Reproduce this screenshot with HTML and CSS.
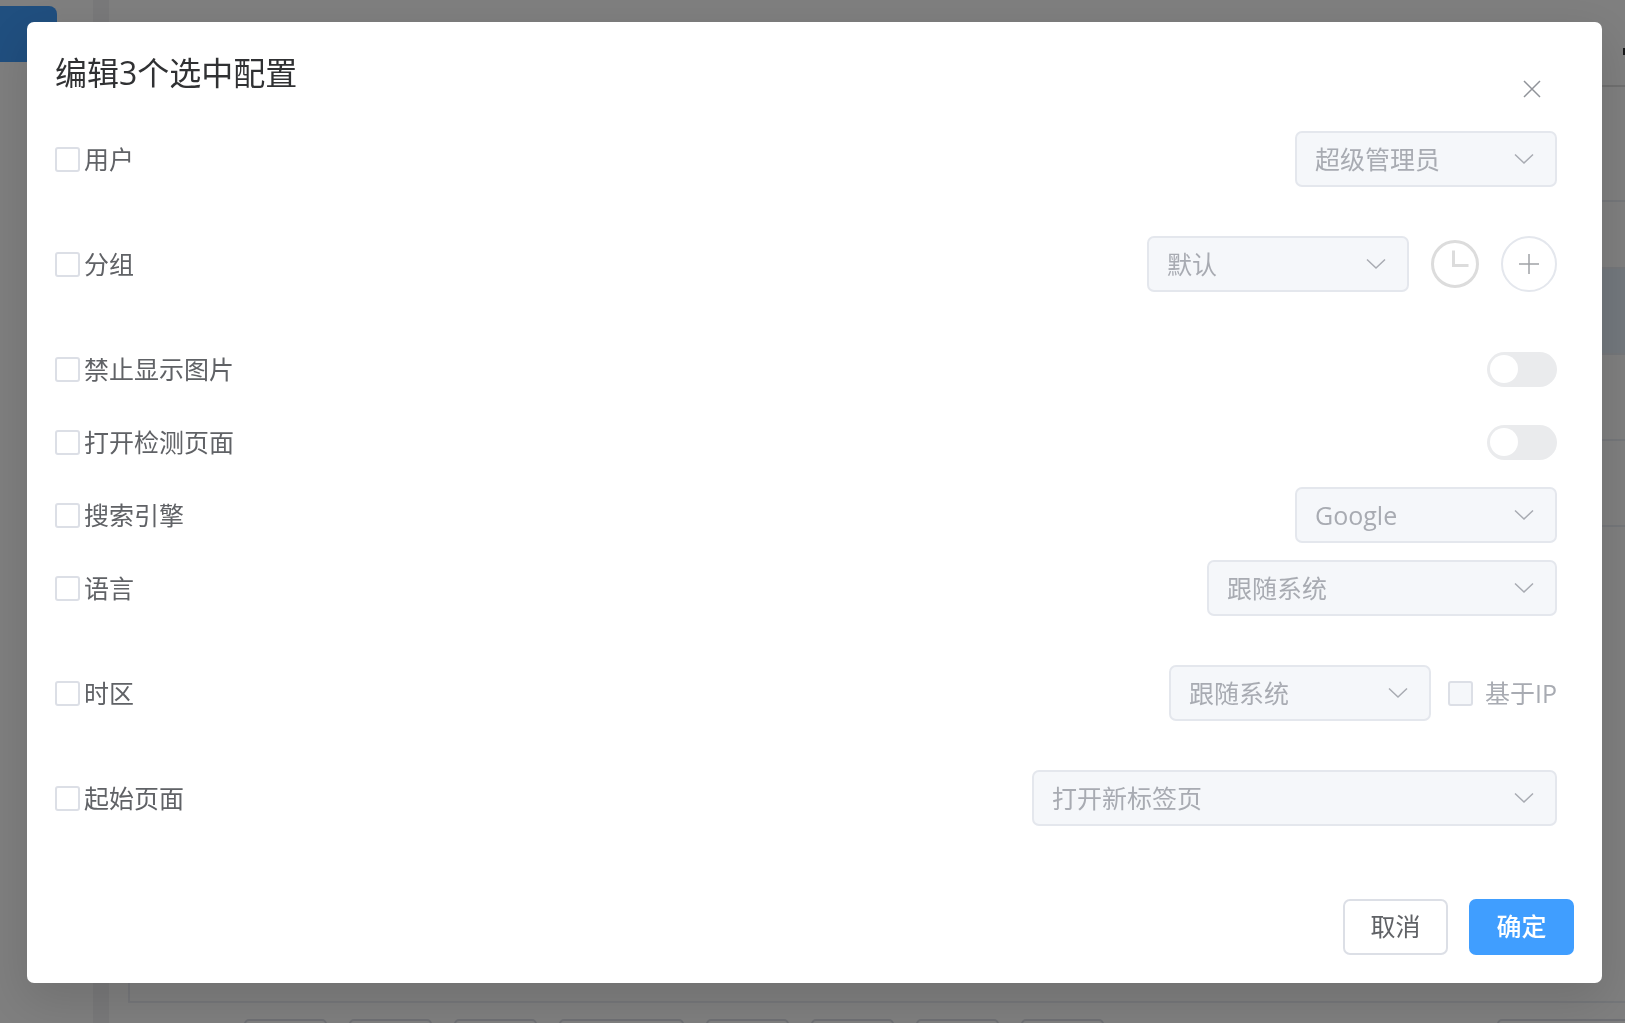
FILE: index.html
```html
<!DOCTYPE html>
<html lang="zh-CN">

<head>
    <meta charset="UTF-8">
    <meta name="viewport" content="width=device-width, initial-scale=1.0">
    <title>编辑3个选中配置</title>
    <link rel="stylesheet" href="styles.css">
</head>

<body>
    <svg class="symbols">
        <symbol id="arrow" viewBox="0 0 20 12">
            <path d="M1 1.5 L10 10 L19 1.5" fill="none" stroke="currentColor" stroke-width="1.5" />
        </symbol>
    </svg>

    <!-- page under the mask -->
    <div class="app" aria-hidden="true">
        <div class="sidebar">
            <div class="menu-item"></div>
        </div>
        <div class="main">
            <div class="topbar">
                <span class="mark"></span>
            </div>
            <div class="list">
                <div class="toolbar"></div>
                <div class="line head"></div>
                <div class="line current"></div>
                <div class="line"></div>
                <div class="line"></div>
            </div>
            <div class="pager">
                <span class="page"></span>
                <span class="page"></span>
                <span class="page"></span>
                <span class="page wide"></span>
                <span class="page"></span>
                <span class="page"></span>
                <span class="page"></span>
                <span class="page"></span>
                <span class="page last"></span>
            </div>
        </div>
    </div>

    <div class="mask">
        <div class="dialog" role="dialog" aria-labelledby="title">
            <div class="header">
                <h1 id="title">编辑3个选中配置</h1>
                <button class="close" type="button" aria-label="关闭">
                    <svg width="18" height="18" viewBox="0 0 18 18">
                        <path d="M1 1 L17 17 M17 1 L1 17" stroke="currentColor" stroke-width="1.5" />
                    </svg>
                </button>
            </div>

            <form class="body">
                <div class="row tall">
                    <label class="check"><input type="checkbox">用户</label>
                    <div class="control">
                        <div class="select">
                            <select aria-label="用户" disabled><option>超级管理员</option></select>
                            <svg class="arrow"><use href="#arrow" /></svg>
                        </div>
                    </div>
                </div>
                <div class="row tall">
                    <label class="check"><input type="checkbox">分组</label>
                    <div class="control">
                        <div class="select">
                            <select aria-label="分组" disabled><option>默认</option></select>
                            <svg class="arrow"><use href="#arrow" /></svg>
                        </div>
                        <button class="clock" type="button" aria-label="最近" disabled>
                            <svg width="48" height="48" viewBox="0 0 48 48" fill="none" stroke="currentColor">
                                <circle cx="24" cy="24" r="22.5" stroke-width="3" />
                                <path d="M22.5 10.5 V25.5 H37.5" stroke-width="3" />
                            </svg>
                        </button>
                        <button class="add" type="button" aria-label="新增" disabled>
                            <svg width="20" height="20" viewBox="0 0 20 20">
                                <path d="M10 0 V20 M0 10 H20" stroke="currentColor" stroke-width="1.5" />
                            </svg>
                        </button>
                    </div>
                </div>
                <div class="row">
                    <label class="check"><input type="checkbox">禁止显示图片</label>
                    <input class="switch" type="checkbox" role="switch" aria-label="禁止显示图片" disabled>
                </div>
                <div class="row">
                    <label class="check"><input type="checkbox">打开检测页面</label>
                    <input class="switch" type="checkbox" role="switch" aria-label="打开检测页面" disabled>
                </div>
                <div class="row">
                    <label class="check"><input type="checkbox">搜索引擎</label>
                    <div class="control">
                        <div class="select">
                            <select aria-label="搜索引擎" disabled><option>Google</option></select>
                            <svg class="arrow"><use href="#arrow" /></svg>
                        </div>
                    </div>
                </div>
                <div class="row tall">
                    <label class="check"><input type="checkbox">语言</label>
                    <div class="control">
                        <div class="select medium">
                            <select aria-label="语言" disabled><option>跟随系统</option></select>
                            <svg class="arrow"><use href="#arrow" /></svg>
                        </div>
                    </div>
                </div>
                <div class="row tall">
                    <label class="check"><input type="checkbox">时区</label>
                    <div class="control timezone">
                        <div class="select">
                            <select aria-label="时区" disabled><option>跟随系统</option></select>
                            <svg class="arrow"><use href="#arrow" /></svg>
                        </div>
                        <label class="check off"><input type="checkbox" disabled>基于IP</label>
                    </div>
                </div>
                <div class="row">
                    <label class="check"><input type="checkbox">起始页面</label>
                    <div class="control">
                        <div class="select large">
                            <select aria-label="起始页面" disabled><option>打开新标签页</option></select>
                            <svg class="arrow"><use href="#arrow" /></svg>
                        </div>
                    </div>
                </div>
            </form>

            <div class="footer">
                <button class="btn" type="button">取消</button>
                <button class="btn primary" type="button">确定</button>
            </div>
        </div>
    </div>
</body>

</html>
```
FILE: styles.css
```css
* {
    box-sizing: border-box;
}

body {
    margin: 0;
    font-family: "Open Sans", "Noto Sans CJK SC", sans-serif;
    font-size: 25px;
    color: #606266;
}

button,
select {
    font: inherit;
    color: inherit;
}

.symbols {
    display: none;
}

/* page under the mask */

.app {
    display: flex;
    height: 100vh;
    overflow: hidden;
    background-color: #fff;
}

.sidebar {
    flex: none;
    width: 109px;
    padding-top: 6px;
    border-right: 16px solid #f2f2f4;
}

.menu-item {
    width: 57px;
    height: 56px;
    border-radius: 0 8px 8px 0;
    background-color: #409eff;
}

.main {
    flex: 1;
    display: flex;
    flex-direction: column;
    min-width: 0;
    padding-left: 19px;
}

.topbar {
    display: flex;
    align-items: center;
    justify-content: flex-end;
    height: 87px;
    padding-top: 18px;
    border-bottom: 2px solid #e0e0e0;
}

.mark {
    width: 2px;
    height: 7px;
    background-color: #303133;
}

.list {
    flex: 1;
    border: 2px solid #ebeef5;
    border-top: 0;
    border-right: 0;
}

.toolbar {
    height: 115px;
    border-bottom: 2px solid #ebeef5;
}

.line {
    height: 86px;
    border-bottom: 2px solid #ebeef5;
}

.head {
    height: 67px;
}

.current {
    background-color: #e6f1fb;
}

.pager {
    display: flex;
    gap: 22px;
    height: 20px;
    padding: 16px 0 0 116px;
}

.page {
    flex: none;
    width: 83px;
    height: 49px;
    border: 2px solid #dcdfe6;
    border-radius: 5px;
}

.wide {
    width: 125px;
}

.last {
    width: 140px;
    margin-left: auto;
    margin-right: -12px;
}

/* dialog */

.mask {
    position: fixed;
    inset: 0;
    overflow: auto;
    padding: 22px 23px 40px 27px;
    background-color: rgba(0, 0, 0, 0.5);
}

.dialog {
    border-radius: 7px;
    background-color: #fff;
    box-shadow: 0 16px 48px 4px rgba(0, 0, 0, 0.12);
}

.header {
    display: flex;
    justify-content: space-between;
    height: 109px;
    padding: 28px 42px 14px 28px;
}

h1 {
    margin: 0;
    font-size: 32px;
    font-weight: normal;
    line-height: 46px;
    color: #303133;
}

.close {
    display: flex;
    align-items: center;
    justify-content: center;
    align-self: flex-end;
    width: 56px;
    height: 56px;
    padding: 0;
    border: 0;
    background: none;
    color: #909399;
    cursor: pointer;
}

.body {
    padding: 0 45px 0 28px;
}

.row {
    display: flex;
    align-items: center;
    justify-content: space-between;
    height: 56px;
    margin-bottom: 17px;
}

.tall {
    margin-bottom: 49px;
}

.check {
    display: flex;
    align-items: center;
    gap: 4px;
    line-height: 56px;
}

.check input {
    appearance: none;
    flex: none;
    width: 25px;
    height: 25px;
    margin: 0;
    border: 2px solid #dcdfe6;
    border-radius: 3px;
    background-color: #fff;
}

.off {
    gap: 12px;
    color: #a8abb2;
}

.check input:disabled {
    background-color: #f5f7fa;
}

.control {
    display: flex;
    align-items: center;
    gap: 22px;
}

.timezone {
    gap: 17px;
}

.select {
    position: relative;
    width: 262px;
}

.medium {
    width: 350px;
}

.large {
    width: 525px;
}

.select select {
    appearance: none;
    display: block;
    width: 100%;
    height: 56px;
    padding: 0 56px 0 18px;
    border: 2px solid #e4e7ed;
    border-radius: 7px;
    background-color: #f5f7fa;
    color: #a8abb2;
    opacity: 1;
}

.arrow {
    position: absolute;
    top: 22px;
    right: 23px;
    width: 20px;
    height: 12px;
    color: #a8abb2;
    pointer-events: none;
}

.clock {
    width: 48px;
    height: 48px;
    padding: 0;
    border: 0;
    background: none;
    color: #dcdcdc;
}

.clock svg {
    display: block;
}

.add {
    display: flex;
    align-items: center;
    justify-content: center;
    width: 56px;
    height: 56px;
    padding: 0;
    border: 2px solid #e4e7ed;
    border-radius: 50%;
    background-color: #fff;
    color: #a0a2a6;
}

.switch {
    appearance: none;
    display: flex;
    align-items: center;
    width: 70px;
    height: 35px;
    margin: 0;
    padding: 0 3px;
    border-radius: 18px;
    background-color: #eaebed;
}

.switch::before {
    content: "";
    width: 28px;
    height: 28px;
    border-radius: 50%;
    background-color: #fff;
}

.footer {
    display: flex;
    justify-content: flex-end;
    gap: 21px;
    padding: 56px 28px 28px;
}

.btn {
    width: 105px;
    height: 56px;
    padding: 0 0 4px;
    border: 2px solid #dcdfe6;
    border-radius: 7px;
    background-color: #fff;
    cursor: pointer;
}

.primary {
    border-color: #409eff;
    background-color: #409eff;
    color: #fff;
    font-weight: 500;
}
```
